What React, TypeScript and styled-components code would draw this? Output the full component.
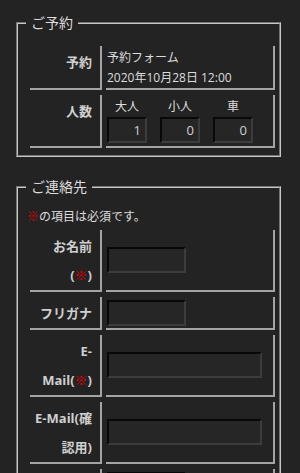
import React from "react";
import styled, { createGlobalStyle } from "styled-components";

const Global = createGlobalStyle`
  html, body {
    margin: 0;
    padding: 0;
    background: #232323;
  }
  body {
    font-family: "Open Sans", "Noto Sans CJK JP", sans-serif;
    color: #dddddd;
  }
`;

const Page = styled.div`
  padding: 13px 19px 0 16px;
  display: flex;
  flex-direction: column;
  gap: 20px;
`;

const Fieldset = styled.fieldset`
  margin: 0;
  border: 2px groove #c8c8c8;
  padding: 10px 4px 7px 8px;
  min-width: 0;
`;

const Legend = styled.legend`
  padding: 0 5px;
  font-size: 14px;
  line-height: 20px;
  color: #dddddd;
`;

const Note = styled.div`
  font-size: 12px;
  line-height: 20px;
  padding-left: 1px;
  color: #dddddd;
`;

const Req = styled.span`
  color: #e00000;
`;

const FormGrid = styled.div`
  display: grid;
  grid-template-columns: 72px 169px;
  column-gap: 4px;
  row-gap: 5px;
  margin-top: 3px;
  padding-left: 4px;
`;

const Label = styled.div`
  min-height: 29px;
  border-right: 2px solid #a4a4a4;
  border-bottom: 2px solid #a4a4a4;
  padding: 2px 8px 0 4px;
  text-align: right;
  font-size: 13px;
  font-weight: 700;
  line-height: 29px;
  color: #cfcfcf;
`;

const Data = styled.div<{ $center?: boolean }>`
  border-right: 2px solid #a4a4a4;
  border-bottom: 2px solid #a4a4a4;
  padding: ${(p) => (p.$center ? "2px 0 2px 1px" : "2px 0 0 1px")};
  display: flex;
  flex-direction: column;
  justify-content: ${(p) => (p.$center ? "center" : "flex-start")};
  font-size: 12px;
  line-height: 20px;
  color: #dddddd;
`;

const Line = styled.div`
  white-space: nowrap;
`;

const People = styled.div`
  display: grid;
  grid-template-columns: repeat(3, 40px);
  column-gap: 13px;
  padding-bottom: 3px;
`;

const PeopleHead = styled.div`
  text-align: center;
  font-size: 12px;
  line-height: 20px;
  color: #dddddd;
`;

const Input = styled.input<{ $w: number }>`
  box-sizing: border-box;
  width: ${(p) => p.$w}px;
  height: 26px;
  margin: 0;
  background: #262626;
  border-style: solid;
  border-width: 2px;
  border-color: #080808 #3c3c3c #3c3c3c #080808;
  color: #d0d0d0;
  font-family: "Open Sans", "Noto Sans CJK JP", sans-serif;
  font-size: 13px;
  padding: 0 4px;
  text-align: ${(p) => (p.$w < 60 ? "right" : "left")};
  outline: none;
`;

export default function App() {
  return (
    <>
      <Global />
      <Page>
        <Fieldset>
          <Legend>ご予約</Legend>
          <FormGrid>
            <Label>予約</Label>
            <Data>
              <Line>予約フォーム</Line>
              <Line>2020年10月28日 12:00</Line>
            </Data>
            <Label>人数</Label>
            <Data>
              <People>
                <PeopleHead>大人</PeopleHead>
                <PeopleHead>小人</PeopleHead>
                <PeopleHead>車</PeopleHead>
                <Input $w={40} defaultValue="1" />
                <Input $w={40} defaultValue="0" />
                <Input $w={40} defaultValue="0" />
              </People>
            </Data>
          </FormGrid>
        </Fieldset>

        <Fieldset>
          <Legend>ご連絡先</Legend>
          <Note>
            <Req>※</Req>の項目は必須です。
          </Note>
          <FormGrid>
            <Label>
              お名前
              <br />(<Req>※</Req>)
            </Label>
            <Data $center>
              <Input $w={79} />
            </Data>
            <Label>フリガナ</Label>
            <Data $center>
              <Input $w={79} />
            </Data>
            <Label>
              E-
              <br />
              Mail(<Req>※</Req>)
            </Label>
            <Data $center>
              <Input $w={155} />
            </Data>
            <Label>
              E-Mail(確
              <br />
              認用)
            </Label>
            <Data $center>
              <Input $w={155} />
            </Data>
            <Label />
            <Data $center>
              <Input $w={79} />
            </Data>
          </FormGrid>
        </Fieldset>
      </Page>
    </>
  );
}
